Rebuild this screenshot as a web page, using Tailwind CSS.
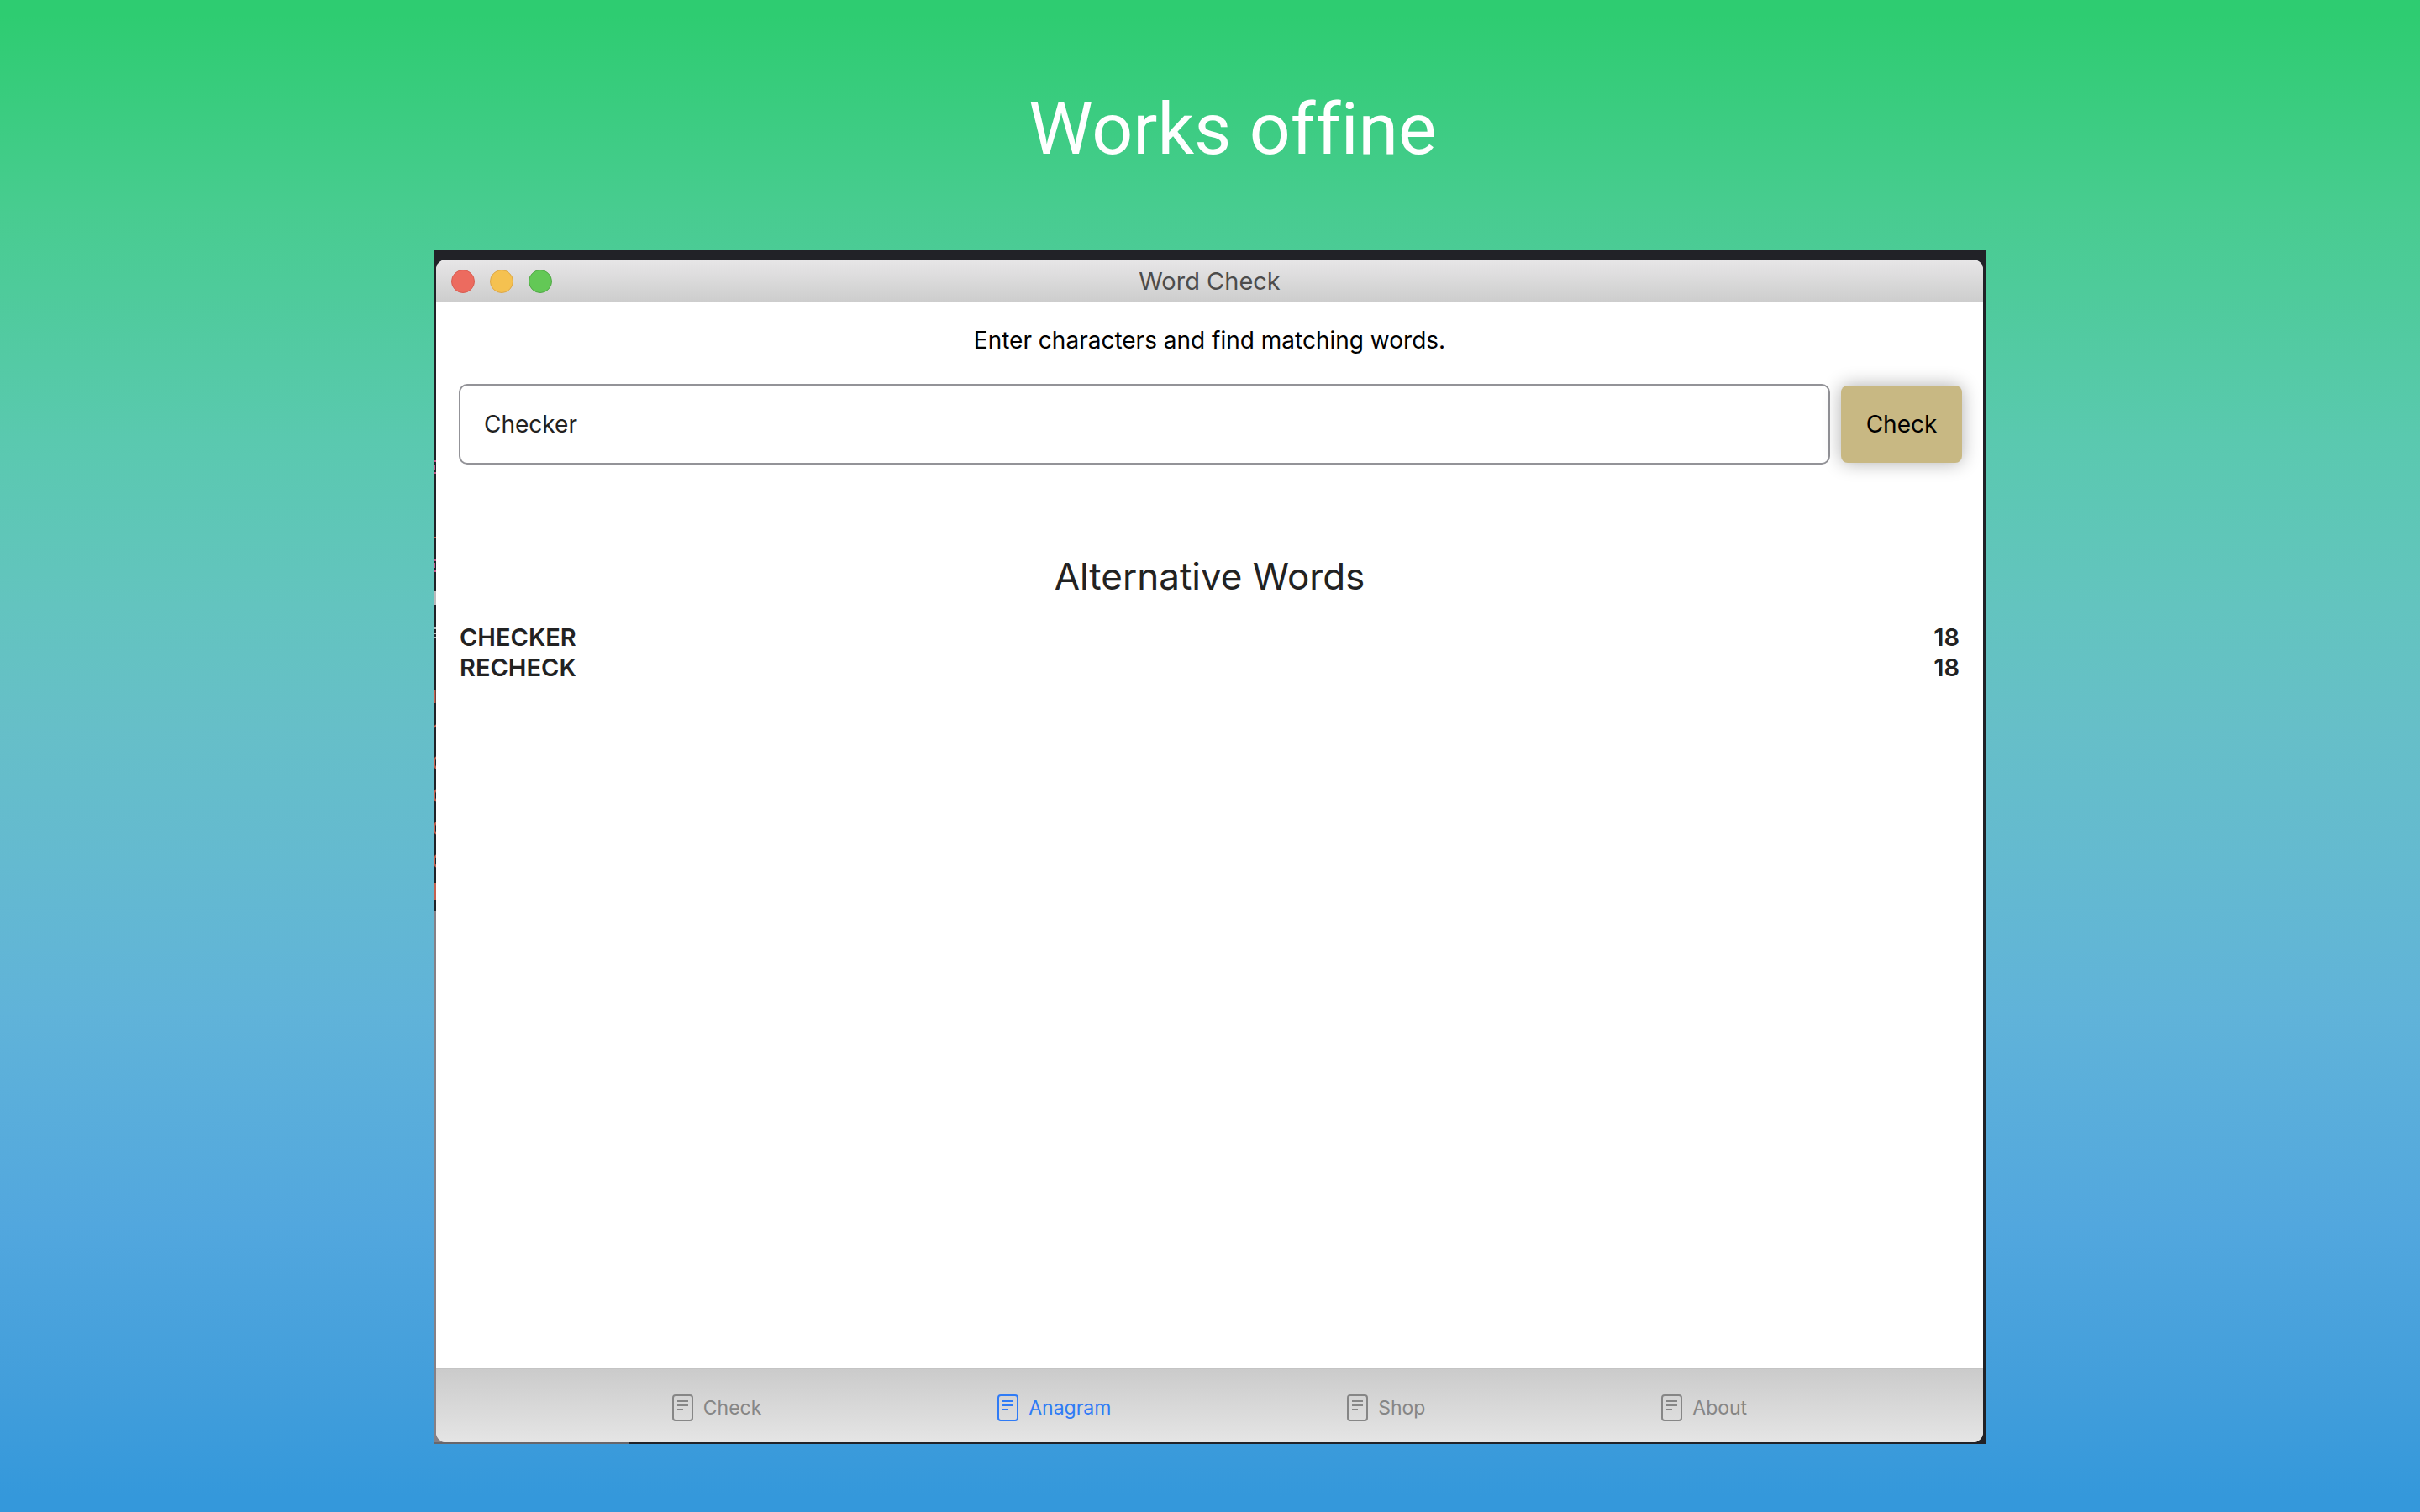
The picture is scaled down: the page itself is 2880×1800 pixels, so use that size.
<!DOCTYPE html>
<html lang="en">
<head>
<meta charset="utf-8">
<title>Word Check</title>
<script src="https://cdn.jsdelivr.net/npm/@tailwindcss/browser@4"></script>
</head>
<body class="flex min-h-screen flex-col bg-[linear-gradient(to_bottom,#2ecc71_0%,#2ecc71_1%,#48cc90_14%,#5ac9af_29%,#63c4bf_40%,#66bfc8_48%,#64bad0_57%,#60b3d9_67%,#52a7de_81%,#429edb_92%,#3498db_99%)] font-['Inter',sans-serif]">
<h1 class="pt-[98px] pl-[54px] text-center font-['Roboto',sans-serif] text-[86px] leading-[112px] font-normal text-white [font-variant-ligatures:none]">Works offine</h1>

<main class="flex flex-1 flex-col pt-[88px] pr-[517px] pb-[81px] pl-[516px]">
  <div class="relative flex flex-1 flex-col bg-[#212227] px-[3px] pt-[11px] pb-[2px]">
    <!-- Editor window showing behind the left and bottom edges -->
    <div class="absolute bottom-0 left-0 h-[634px] w-4 bg-[#858086]"></div>
    <div class="absolute bottom-0 left-0 h-[2px] w-[232px] bg-[#68666a]"></div>
    <svg class="absolute top-0 left-0" width="3" height="788" viewBox="0 0 3 788" fill="none" stroke-width="2" aria-hidden="true">
      <g stroke="#c35a8c"><path d="M3 251H1M1 255V261M3 265H1M3 369H1M1 372V378M3 382H1"/></g>
      <g stroke="#b9b9bb"><path d="M2 406V422M3 450H0M3 456H0M3 461H1"/></g>
      <g stroke="#c3604f"><path d="M0 342H3M1.500 524V539M3 565L1 568M3 603L1 607V613L3 617M3 642L1 646V652L3 656M3 681L1 685V691L3 695M3 720L1 724V730L3 734M0 754H2V773H0"/></g>
    </svg>

    <section class="relative flex flex-1 flex-col overflow-hidden rounded-[12px] bg-white">
      <header class="relative flex h-[51px] items-center justify-center border-t border-b border-t-[#f4f2f3] border-b-[#a3a3a3] bg-linear-to-b from-[#e7e6e7] to-[#cdcdcd]">
        <div class="absolute left-[18px] flex gap-[18px]">
          <button type="button" aria-label="Close" class="size-7 rounded-full border border-[#d85c50] bg-[#ec6b5f]"></button>
          <button type="button" aria-label="Minimize" class="size-7 rounded-full border border-[#dca747] bg-[#f5c150]"></button>
          <button type="button" aria-label="Zoom" class="size-7 rounded-full border border-[#50a845] bg-[#63c856]"></button>
        </div>
        <h2 class="text-[29px] leading-9 text-[#4c4c4c]">Word Check</h2>
      </header>

      <form class="flex flex-col px-[27px] pt-[27px]" onsubmit="return false">
        <label for="letters" class="text-center text-[28px] leading-9 text-black">Enter characters and find matching words.</label>
        <div class="mt-[34px] flex items-center gap-[13px]">
          <input id="letters" type="text" value="Checker" class="h-24 min-w-0 flex-1 rounded-[10px] border-2 border-[#939398] bg-white px-7 text-[28px] text-[#222] outline-none">
          <button type="submit" class="mr-[-2px] h-[92px] w-36 rounded-[8px] bg-[#c8b883] text-[28px] text-black shadow-[0_0_22px_rgba(0,0,0,0.32)]">Check</button>
        </div>
      </form>

      <h3 class="mt-[104px] text-center text-[44px] leading-[58px] text-[#222]">Alternative Words</h3>
      <div class="mt-[26px] flex-1 px-7">
        <table class="w-full text-[29px] leading-9 font-semibold text-[#222]">
          <tbody>
            <tr><td>CHECKER</td><td class="text-right">18</td></tr>
            <tr><td>RECHECK</td><td class="text-right">18</td></tr>
          </tbody>
        </table>
      </div>

      <nav class="flex h-[89px] items-center justify-evenly border-t-2 border-[#c4c4c4] bg-linear-to-b from-[#cbcbcb] to-[#e5e5e5] pt-1 text-[23px] leading-8 text-[#868686]">
        <a href="#check" class="flex items-center gap-3">
          <svg class="h-8 w-[25px]" viewBox="0 0 25 32" fill="none" stroke="currentColor" stroke-width="2" aria-hidden="true"><rect x="1" y="1" width="23" height="30" rx="3"/><path d="M6 8h13M6 13h13M6 18h7"/></svg>
          <span>Check</span></a>
        <a href="#anagram" class="flex items-center gap-3 text-[#2f7bf6]" aria-current="page">
          <svg class="h-8 w-[25px]" viewBox="0 0 25 32" fill="none" stroke="currentColor" stroke-width="2" aria-hidden="true"><rect x="1" y="1" width="23" height="30" rx="3"/><path d="M6 8h13M6 13h13M6 18h7"/></svg>
          <span>Anagram</span></a>
        <a href="#shop" class="flex items-center gap-3">
          <svg class="h-8 w-[25px]" viewBox="0 0 25 32" fill="none" stroke="currentColor" stroke-width="2" aria-hidden="true"><rect x="1" y="1" width="23" height="30" rx="3"/><path d="M6 8h13M6 13h13M6 18h7"/></svg>
          <span>Shop</span></a>
        <a href="#about" class="flex items-center gap-3">
          <svg class="h-8 w-[25px]" viewBox="0 0 25 32" fill="none" stroke="currentColor" stroke-width="2" aria-hidden="true"><rect x="1" y="1" width="23" height="30" rx="3"/><path d="M6 8h13M6 13h13M6 18h7"/></svg>
          <span>About</span></a>
      </nav>
    </section>
  </div>
</main>
</body>
</html>
